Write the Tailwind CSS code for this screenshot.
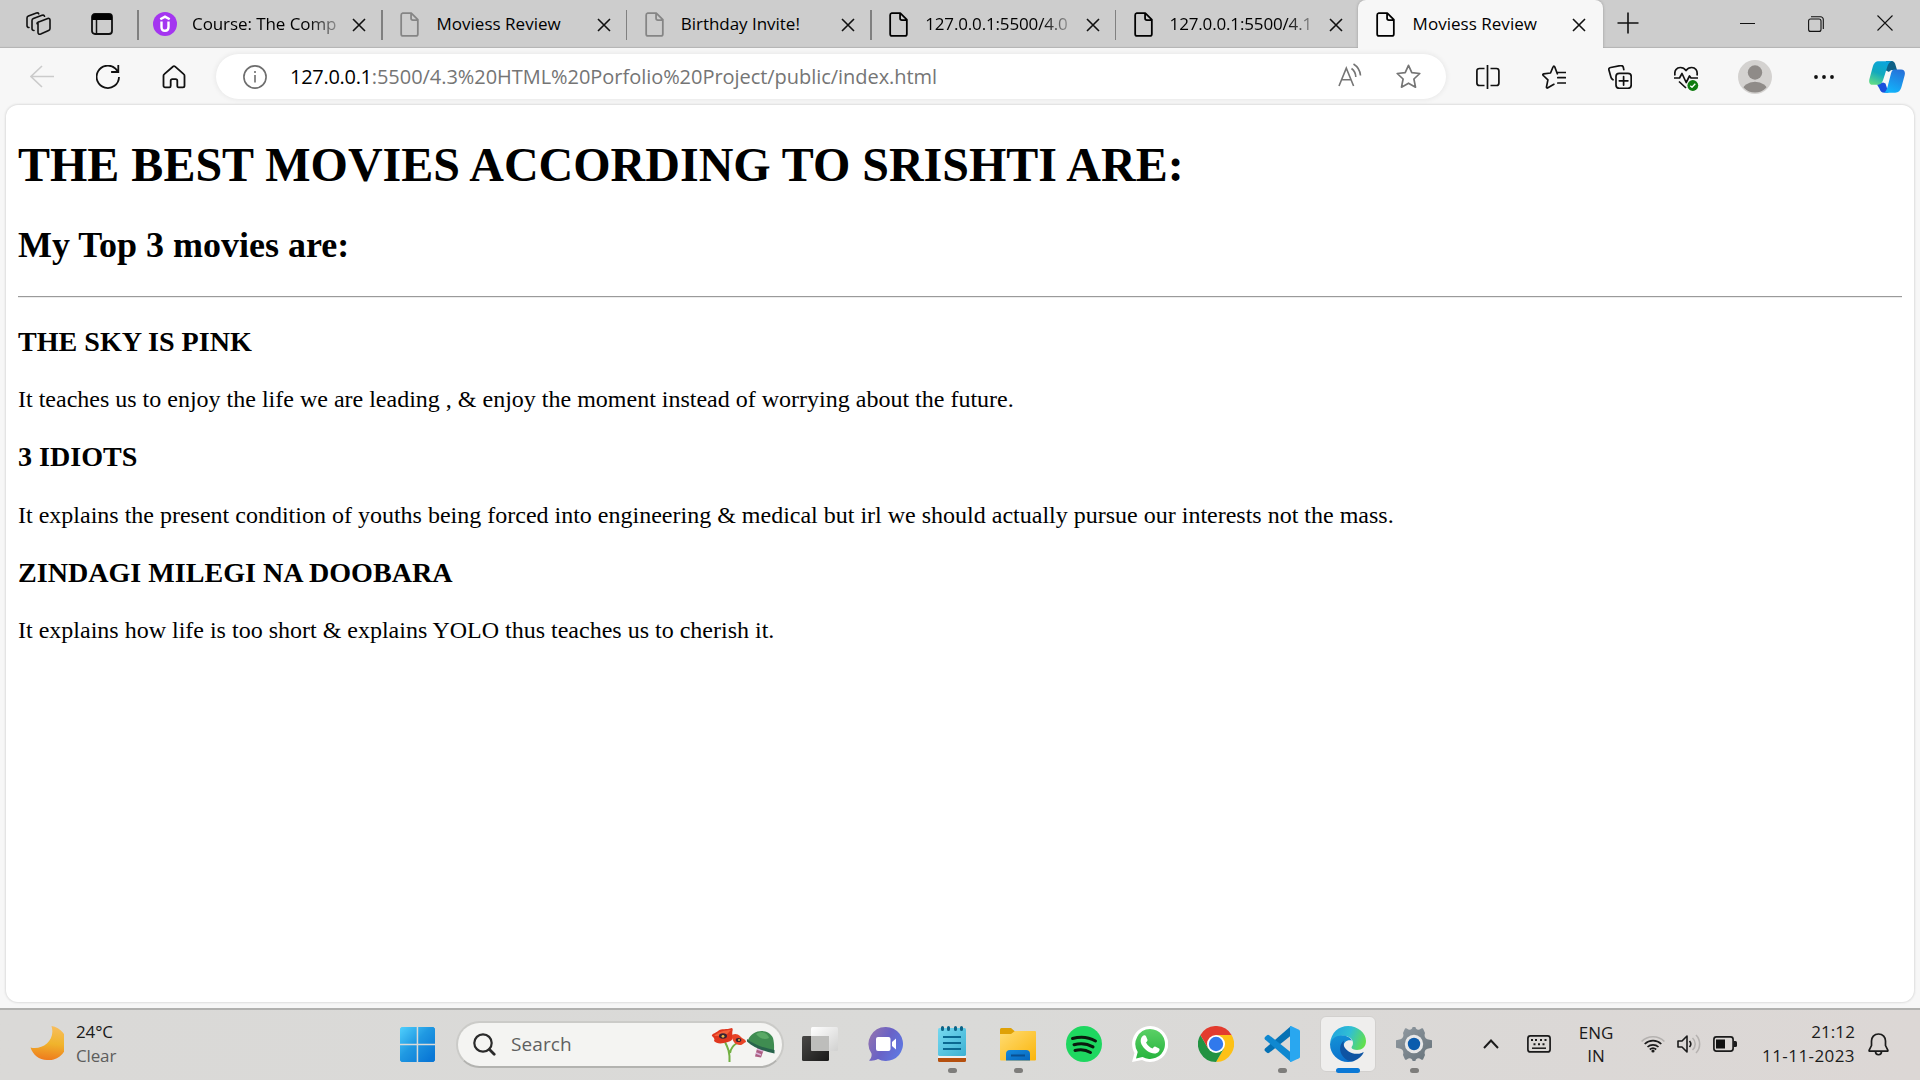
<!DOCTYPE html>
<html lang="en">
<head>
<meta charset="utf-8">
<title>Moviess Review</title>
<script src="https://cdn.jsdelivr.net/npm/@tailwindcss/browser@4"></script>
</head>
<body class="w-[1920px] h-[1080px] overflow-hidden bg-[#f7f7f7] text-black font-['Open_Sans','Noto_Sans',sans-serif]">
<svg class="hidden">
  <symbol id="page" viewBox="0 0 24 24"><path d="M5.5 1h8.2L20 7.300V21a2 2 0 0 1-2 2H6a2 2 0 0 1-2-2V2.800A1.800 1.800 0 0 1 5.500 1ZM13.500 1v5a1.800 1.800 0 0 0 1.800 1.800H20" fill="none" stroke="currentColor" stroke-width="1.700" stroke-linejoin="round"/></symbol>
  <symbol id="x" viewBox="0 0 14 14"><path d="M1 1l12 12M13 1L1 13" fill="none" stroke="#111" stroke-width="1.600"/></symbol>
</svg>
<div class="flex flex-col h-full">

  <!-- Tab strip -->
  <header class="flex h-12 shrink-0 bg-[#cdcdcd] shadow-[inset_0_-2px_1px_-1px_#b4b4b4]">
    <div class="flex w-[137px] shrink-0 items-center pl-[26px] gap-[40px]">
      <svg class="size-[25px]" viewBox="0 0 25 25" fill="none" stroke="#111" stroke-width="1.600" stroke-linejoin="round" stroke-linecap="round"><path d="M12 10.200l9.800-3.700c1.200-.4 2.200.2 2.200 1.500v8.500c0 1-.5 1.700-1.400 2.100l-7.900 3.400c-1.500.600-2.700 0-2.700-1.500V10.500M12 10.200c-1 .4-1 .8-1 1.500M8 18.500c-1.300 0-2-.7-2-2V8.600c0-1 .4-1.600 1.400-2l8.600-3.300c1.500-.5 2.300 0 2.500 1M3 15.500c-1.300 0-2-.7-2-2V6.100c0-1 .4-1.600 1.400-2l8-3c1.300-.4 2-.1 2.300.7"/></svg>
      <svg class="w-[22px] h-[22px]" viewBox="0 0 22 22"><rect x="1" y="1" width="20" height="20" rx="3" fill="none" stroke="#111" stroke-width="1.800"/><path d="M1 7V4a3 3 0 0 1 3-3h14a3 3 0 0 1 3 3v3z" fill="#000"/><path d="M5.500 7v14" stroke="#111" stroke-width="1.500"/></svg>
    </div>

    <div class="flex w-[244.4px] shrink-0 items-center border-l-2 border-transparent relative">
      <span class="absolute -left-[2px] top-[10px] h-[30px] w-[1.500px] bg-[#808080]"></span>
      <svg class="ml-[14px] size-6" viewBox="0 0 24 24"><circle cx="12" cy="12" r="12" fill="#a435f0"/><path d="M7.300 7.300 12 4.600l4.700 2.700M8.500 9.500V15c0 2.700 1.300 3.800 3.500 3.800s3.500-1.100 3.500-3.800V9.500" fill="none" stroke="#fff" stroke-width="2.400"/></svg>
      <span class="ml-[15px] w-[149px] overflow-hidden whitespace-nowrap text-[17px] tracking-[-0.080px] bg-linear-to-r from-black from-78% to-black/20 to-100% bg-clip-text text-transparent">Course: The Comp</span>
      <svg class="ml-[11px] mt-0.5 size-[14px]"><use href="#x"/></svg>
    </div>
    <div class="flex w-[244.4px] shrink-0 items-center border-l-2 border-transparent relative">
      <span class="absolute -left-[2px] top-[10px] h-[30px] w-[1.500px] bg-[#808080]"></span>
      <svg class="ml-[14px] size-[25px] text-[#858585]"><use href="#page"/></svg>
      <span class="ml-[14px] w-[149px] overflow-hidden whitespace-nowrap text-[17px] tracking-[0.030px]">Moviess Review</span>
      <svg class="ml-[12px] mt-0.5 size-[14px]"><use href="#x"/></svg>
    </div>
    <div class="flex w-[244.4px] shrink-0 items-center border-l-2 border-transparent relative">
      <span class="absolute -left-[2px] top-[10px] h-[30px] w-[1.500px] bg-[#808080]"></span>
      <svg class="ml-[14px] size-[25px] text-[#858585]"><use href="#page"/></svg>
      <span class="ml-[14px] w-[149px] overflow-hidden whitespace-nowrap text-[17px] tracking-[-0.030px]">Birthday Invite!</span>
      <svg class="ml-[11px] mt-0.5 size-[14px]"><use href="#x"/></svg>
    </div>
    <div class="flex w-[244.4px] shrink-0 items-center border-l-2 border-transparent relative">
      <span class="absolute -left-[2px] top-[10px] h-[30px] w-[1.500px] bg-[#808080]"></span>
      <svg class="ml-[14px] size-[25px]"><use href="#page"/></svg>
      <span class="ml-[14px] w-[149px] overflow-hidden whitespace-nowrap text-[17px] tracking-[-0.150px] bg-linear-to-r from-black from-78% to-black/20 to-98% bg-clip-text text-transparent">127.0.0.1:5500/4.0</span>
      <svg class="ml-[12px] mt-0.5 size-[14px]"><use href="#x"/></svg>
    </div>
    <div class="flex w-[243px] shrink-0 items-center border-l-2 border-transparent relative">
      <span class="absolute -left-[2px] top-[10px] h-[30px] w-[1.500px] bg-[#808080]"></span>
      <svg class="ml-[14px] size-[25px]"><use href="#page"/></svg>
      <span class="ml-[14px] w-[149px] overflow-hidden whitespace-nowrap text-[17px] tracking-[-0.150px] bg-linear-to-r from-black from-78% to-black/20 to-98% bg-clip-text text-transparent">127.0.0.1:5500/4.1</span>
      <svg class="ml-[10px] mt-0.5 size-[14px]"><use href="#x"/></svg>
    </div>
    <div class="flex w-[245px] shrink-0 items-center rounded-t-lg bg-[#f7f7f7] shadow-[0_0_3px_#999] [clip-path:inset(0_-4px_0_-4px)]">
      <svg class="ml-[15px] size-[25px]"><use href="#page"/></svg>
      <span class="ml-[15px] w-[149px] whitespace-nowrap text-[17px] tracking-[0.030px]">Moviess Review</span>
      <svg class="ml-[10px] mt-0.5 size-[14px]"><use href="#x"/></svg>
    </div>
    <div class="flex grow pt-[12px] pl-[14px]">
      <svg class="size-[22px]" viewBox="0 0 22 22"><path d="M11 .5v21M.5 11h21" stroke="#111" stroke-width="1.600"/></svg>
      <svg class="ml-[101px] mt-1 size-4" viewBox="0 0 16 16"><path d="M0 7.500h15" stroke="#111"/></svg>
      <svg class="ml-[52px] mt-1 size-4" viewBox="0 0 16 16" fill="none" stroke="#111" stroke-width="1.100"><rect x=".6" y="3" width="12.400" height="12.400" rx="2"/><path d="M3 .8h9.500a2.800 2.800 0 0 1 2.800 2.800V13"/></svg>
      <svg class="ml-[53px] mt-[3px] size-4" viewBox="0 0 16 16"><path d="M.5.500l15 15M15.500.500l-15 15" stroke="#111" stroke-width="1.100"/></svg>
    </div>
  </header>

  <!-- Toolbar -->
  <nav class="flex h-[57px] shrink-0 items-center pl-[30px]">
    <svg class="size-6" viewBox="0 0 24 24" fill="none" stroke="#cbcbcb" stroke-width="1.600"><path d="M12 1L1 11.500 12 22M1 11.500h23"/></svg>
    <svg class="ml-[42px] size-6" viewBox="0 0 24 24" fill="none" stroke="#111" stroke-width="1.800"><path d="M23 12A11.200 11.200 0 1 1 19.500 3.700L22 6.800M22.300 0v7h-7.200" /></svg>
    <svg class="ml-[42px] size-6" viewBox="0 0 24 24" fill="none" stroke="#111" stroke-width="1.800" stroke-linejoin="round"><path d="M10.800 1.700a1.800 1.800 0 0 1 2.400 0l8.500 7.400c.5.400.8 1 .8 1.700V20.800c0 .9-.7 1.600-1.600 1.600h-4.300c-.9 0-1.300-.7-1.300-1.600v-5c0-1-.7-1.600-1.600-1.600h-3.400c-1 0-1.600.6-1.600 1.600v5c0 .9-.4 1.600-1.300 1.600H3.100c-.9 0-1.600-.7-1.600-1.600V10.800c0-.7.300-1.300.8-1.700z"/></svg>
    <div class="ml-[30px] flex h-[45px] w-[1230px] items-center rounded-full bg-white pl-[27px] shadow-[0_0_5px_1px_#00000010]">
      <svg class="size-6" viewBox="0 0 24 24" fill="none" stroke="#6e6e6e" stroke-width="1.600"><circle cx="12" cy="12" r="11.100"/><path d="M12 10v7.500M12 6v2"/></svg>
      <span class="ml-[23px] w-[1048px] whitespace-nowrap text-[20px] tracking-[-0.045px] text-[#757575]"><span class="text-black tracking-[-0.290px]">127.0.0.1</span>:5500/4.3%20HTML%20Porfolio%20Project/public/index.html</span>
      <svg class="-mt-1 size-6 shrink-0" viewBox="0 0 24 24" fill="none" stroke="#757575" stroke-width="1.600"><path d="M1 23L8.300 5.200 15.600 23M3.500 16.800h9.600M13.500 5.500a11 11 0 0 1 4.300 8.500M15.500 1a15 15 0 0 1 7 11.500"/></svg>
      <svg class="ml-[34px] size-[25px] shrink-0" viewBox="0 0 25 25" fill="none" stroke="#757575" stroke-width="1.700" stroke-linejoin="round"><path d="M12.500 1.300l3.300 7.300 8 .9-5.900 5.500 1.600 8.200-7-4-7 4 1.600-8.200L1.200 9.500l8-.9z"/></svg>
    </div>
    <svg class="ml-[30px] size-6" viewBox="0 0 24 24" fill="none" stroke="#111" stroke-width="1.700"><path d="M8.500 3.500H3.500C1.800 3.500.9 4.300.9 6v12c0 1.700.9 2.500 2.600 2.500h5M14.500 3.500h6c1.700 0 2.400.8 2.400 2.500v12c0 1.700-.7 2.500-2.400 2.500h-6M11.500 0v24"/></svg>
    <svg class="ml-[42px] size-6" viewBox="0 0 24 24" fill="none" stroke="#111" stroke-width="1.700" stroke-linejoin="round" stroke-linecap="round"><path d="M15.300 8.800L12.800 2c-.5-1.300-1.300-1.300-1.800 0L8.500 8 1.700 8.800c-1 .2-1.200 1-.4 1.700l4.600 4.300-1.400 7c-.2 1.100.5 1.500 1.400 1l6-3.500M15.800 7.500H23.500M15.800 12.700H23.500M15.800 18H23.500"/></svg>
    <svg class="ml-[42px] size-6" viewBox="0 0 24 24" fill="none" stroke="#111" stroke-width="1.700" stroke-linecap="round"><rect x="8" y="8.300" width="15.200" height="15" rx="3.200"/><path d="M15.600 11.500v8.600M11.300 15.800h8.600M5 14.800C3.600 14 3.200 13.300 2.900 12L1 5.300C.5 3.700 1 2.900 2.700 2.500l9.500-1.900c1.700-.3 2.700.200 3.100 1.700l.5 2.300"/></svg>
    <svg class="ml-[42px] size-[26px] mt-1 -mr-[2px] shrink-0" viewBox="0 0 26 26" fill="none" stroke="#111" stroke-width="1.700" stroke-linejoin="round"><path d="M1 9.500C0 4 3 1.500 6.300 1.500c2.700 0 4.700 1.500 5.700 3 1-1.500 3-3 5.700-3C21 1.500 24 4 23 9.500M0 12h5.500L8 7.500l4.200 9 3.300-6.500 1.500 2H24M5 15.500l7 6.500"/><circle cx="18.800" cy="19.500" r="5.400" fill="#107c10" stroke="none"/><path d="M16.300 19.800l1.700 1.500 3.300-3.500" stroke="#fff" stroke-width="1.300"/></svg>
    <svg class="ml-[40px] size-[34px]" viewBox="0 0 34 34"><clipPath id="av"><circle cx="17" cy="17" r="15.500"/></clipPath><circle cx="17" cy="17" r="17" fill="#d4d2d0"/><circle cx="17" cy="12.500" r="7.200" fill="#8f8b88"/><ellipse cx="17" cy="31" rx="12.700" ry="9.300" fill="#8f8b88" clip-path="url(#av)"/></svg>
    <svg class="ml-[40px] size-6" viewBox="0 0 24 24" fill="#111"><circle cx="4" cy="12" r="1.900"/><circle cx="12" cy="12" r="1.900"/><circle cx="20" cy="12" r="1.900"/></svg>
    <svg class="ml-[33px] h-8 w-9 mt-px" viewBox="0 0 36 32">
      <defs><linearGradient id="c1" x1=".6" y1="0" x2=".2" y2="1"><stop offset="0" stop-color="#0ba5dc"/><stop offset=".5" stop-color="#12a9bd"/><stop offset="1" stop-color="#62dd85"/></linearGradient><linearGradient id="c2" x1=".8" y1="0" x2=".4" y2="1"><stop offset="0" stop-color="#2670d8"/><stop offset="1" stop-color="#12b3fb"/></linearGradient></defs>
      <path d="M17 0h5c3 0 4 1.500 4.800 5l1.200 4h-4c-2 0-3 .5-4 2l-4-2z" fill="#0f6187"/><path d="M8 23.500l6-2 2.500 1 3 9.200h-4c-3 0-4-1.500-5-4z" fill="#1b4fdc"/>
      <path d="M10 .3h13c-3 .8-4 3-5 6.500l-3.500 11c-1.300 4.500-3 6-7 6H4c-3.500 0-4.500-2.500-3.500-6l3-11C4.600 2.200 6.600.3 10 .3z" fill="url(#c1)"/>
      <path d="M25 8.500h7c3.500 0 4.500 2.500 3.600 6l-3 11c-1.200 4.200-3 6.200-6.500 6.200H14.500c2.500-.8 3.200-3 4.200-6.500l2.700-10.500c1-4 1.800-6.200 3.600-6.200z" fill="url(#c2)"/>
    </svg>
  </nav>

  <!-- Page -->
  <main class="mx-[6px] h-[897px] shrink-0 flow-root rounded-[12px] bg-white px-3 font-['Liberation_Serif',serif] shadow-[0_0_2px_1px_#dedede]">
    <h1 class="mt-[32px] mb-[33px] text-[48px] leading-[55px] font-bold">THE BEST MOVIES ACCORDING TO SRISHTI ARE:</h1>
    <h2 class="my-[30px] text-[36px] leading-[41px] font-bold">My Top 3 movies are:</h2>
    <hr class="mt-[30px] mb-[28px] h-[2px] border-t border-b border-t-[#9a9a9a] border-b-[#ececec]">
    <h3 class="my-[28px] text-[28.080px] leading-[32px] font-bold">THE SKY IS PINK</h3>
    <p class="my-[24px] text-[24px] leading-[27px]">It teaches us to enjoy the life we are leading , &amp; enjoy the moment instead of worrying about the future.</p>
    <h3 class="my-[28.300px] text-[28.080px] leading-[32px] font-bold">3 IDIOTS</h3>
    <p class="my-[24px] text-[24px] leading-[27px]">It explains the present condition of youths being forced into engineering &amp; medical but irl we should actually pursue our interests not the mass.</p>
    <h3 class="my-[28.300px] text-[28.080px] leading-[32px] font-bold">ZINDAGI MILEGI NA DOOBARA</h3>
    <p class="my-[24px] text-[24px] leading-[27px]">It explains how life is too short &amp; explains YOLO thus teaches us to cherish it.</p>
  </main>

  <!-- Taskbar -->
  <footer class="mt-[6px] flex h-[72px] shrink-0 items-center border-t-2 border-[#b1b1af] bg-linear-to-r from-[#dad9d7] via-[#dadad8] to-[#dcd7d5] pb-[2px] text-[#1b1b1b]">
    <svg class="ml-[30px] -mt-0.5 size-[34px]" viewBox="0 0 34 34"><defs><linearGradient id="mo" x1=".5" y1="0" x2=".4" y2="1"><stop offset="0" stop-color="#f7bd5c"/><stop offset=".5" stop-color="#f0b42c"/><stop offset="1" stop-color="#ee7a1d"/></linearGradient></defs><path d="M21.500 0A17 17 0 0 1 17 34C9 34 3 29 .5 21.500 12 24.500 26 15 21.500 0z" fill="url(#mo)"/></svg>
    <div class="ml-[12px] w-[324px] text-[17px] leading-6 tracking-[-0.150px]"><div>24°C</div><div class="text-[#5d5d5c]">Clear</div></div>
    <svg class="size-[35px] shrink-0" viewBox="0 0 35 35"><defs><linearGradient id="wi" gradientUnits="userSpaceOnUse" x1="0" y1="0" x2="31" y2="31"><stop offset="0" stop-color="#50d0fd"/><stop offset=".5" stop-color="#2099e2"/><stop offset="1" stop-color="#0a78d6"/></linearGradient></defs><path d="M1.500 0H16.700V16.700H0V1.500zM18.200 0H33.500L35 1.500V16.700H18.200zM0 18.200H16.700V35H1.500L0 33.500zM18.200 18.200H35V33.500L33.500 35H18.200z" fill="url(#wi)"/></svg>
    <div class="ml-[21px] flex h-[47px] w-[328px] shrink-0 items-center rounded-full border-2 border-[#cbcbc8] border-b-[#b3b3b0] bg-[#f4f4f2] pl-[15px]">
      <svg class="size-[23px]" viewBox="0 0 23 23" fill="none" stroke="#2a2a2a" stroke-linecap="round"><circle cx="10" cy="10" r="8.700" stroke-width="2.200"/><path d="M16.500 16.500l4.700 4.700" stroke-width="2.800"/></svg>
      <span class="ml-[15px] w-[200px] text-[19px] tracking-[0.100px] text-[#5f5f5f]">Search</span>
      <svg class="mt-1 size-9 shrink-0" viewBox="0 0 36 36"><path d="M18.500 34C19 24 17 20 14 14M19 25c1-6 4-8 7-10" fill="none" stroke="#72b043" stroke-width="2"/><path d="M1 8C0 6 5 5 7 3c4-3 8-1 14-3 2 2-1 3 1 9 0 4-5 5-9 6-5 1-8 0-10-2 1-2 0-3-2-5z" fill="#e0361e"/><path d="M3 8c4-4 11-6 17-6-3 3-4 5-8 6z" fill="#f4613a"/><ellipse cx="12" cy="8" rx="4" ry="2.800" fill="#382435"/><circle cx="12" cy="8.300" r="1.400" fill="#efb943"/><path d="M21 7c3-2 6-1 8 1 2 3 6 3 6 6-3 1-3 3-6 3-5 0-8-4-8-10z" fill="#e84427"/><ellipse cx="27.500" cy="12" rx="2.800" ry="2" fill="#3a2233"/><circle cx="28" cy="12" r="1" fill="#efb943"/></svg>
      <svg class="size-7 shrink-0" viewBox="0 0 28 28"><path d="M11 15l6 3-1 4-2 5.500-6-1 1-4z" fill="#ad5f83"/><path d="M10 19l6 2M9 23l5 2" stroke="#dbb6dc" stroke-width="1.500"/><path d="M1 10C6-1 21-2 26 8c1.500 6 1 10 1 14C19 21 9 17 1 10z" fill="#3f8c51"/><path d="M9 4c5-4 12-1 13 4-4 2-9 1-13-4z" fill="#5aa966"/><path d="M0 9C8 15 18 18.500 27.500 20v3.500C17 21 7 18 0 11.500z" fill="#28644c"/></svg>
    </div>

    <div class="-ml-[3px] flex h-full shrink-0 items-center">
      <div class="flex h-full w-[66px] items-center justify-center pl-3">
        <svg class="size-9" viewBox="0 0 36 36"><defs><linearGradient id="tv" x1="0" y1="0" x2="1" y2="1"><stop offset="0" stop-color="#494846"/><stop offset="1" stop-color="#191919"/></linearGradient><linearGradient id="tw" x1="0" y1="0" x2="1" y2="1"><stop offset="0" stop-color="#fff"/><stop offset="1" stop-color="#d1d1d0"/></linearGradient></defs><rect x="0" y="10" width="27" height="25" rx="1.500" fill="url(#tv)"/><rect x="9" y="1" width="27" height="24" rx="1.500" fill="url(#tw)"/><path d="M9 10h18v15H10.500L9 23.500z" fill="#bdbdbb"/></svg>
      </div>
      <div class="flex h-full w-[66px] items-center justify-center pl-3">
        <svg class="size-9" viewBox="0 0 36 36"><defs><linearGradient id="ch" x1="0" y1=".2" x2="1" y2=".7"><stop offset="0" stop-color="#9273b0"/><stop offset=".5" stop-color="#6962c6"/><stop offset="1" stop-color="#5e79e3"/></linearGradient></defs><path d="M18 1a17 17 0 1 1-8 32c-3 1.500-6 2-9 1.500 2-2 3-4 2.500-7A17 17 0 0 1 18 1z" fill="url(#ch)"/><rect x="8" y="11" width="14.500" height="14" rx="2" fill="#fff"/><path d="M24 16l4-3.500v11L24 20z" fill="#fff"/></svg>
      </div>
      <div class="relative flex h-full w-[66px] items-center justify-center pl-3">
        <svg class="size-9" viewBox="0 0 36 36"><defs><linearGradient id="np" x1="0" y1="0" x2="1" y2="1"><stop offset="0" stop-color="#76d9f0"/><stop offset="1" stop-color="#3db1d3"/></linearGradient></defs><path d="M4 31h28v3.500a1.500 1.500 0 0 1-1.500 1.500h-25A1.500 1.500 0 0 1 4 34.500z" fill="#b5500f"/><path d="M4 29h28v3H4z" fill="#f2f0ef"/><rect x="4" y="2" width="28" height="28" rx="1.500" fill="url(#np)"/><path d="M9 11h18M9 17h18M9 23h18" stroke="#0a6891" stroke-width="2"/><path d="M8.500 1.500v2M14.500 1.500v2M21.500 1.500v2M27.500 1.500v2" stroke="#0d6487" stroke-width="3" stroke-linecap="round"/></svg>
        <span class="absolute bottom-[5px] left-[35px] h-[5px] w-[9px] rounded-full bg-[#7e7d7b]"></span>
      </div>
      <div class="relative flex h-full w-[66px] items-center justify-center pl-3">
        <svg class="size-9" viewBox="0 0 36 36"><defs><linearGradient id="fo" x1="0" y1="0" x2="1" y2="1"><stop offset="0" stop-color="#ffdc73"/><stop offset="1" stop-color="#fab50b"/></linearGradient><linearGradient id="fb" x1="0" y1="0" x2="1" y2="1"><stop offset="0" stop-color="#158add"/><stop offset="1" stop-color="#0766bd"/></linearGradient></defs><path d="M0 3.500A1.500 1.500 0 0 1 1.500 2H11l4 3.500H34V12H0z" fill="#dfa106"/><path d="M0 8h11l4-3h20a1 1 0 0 1 1 1v27.500a1 1 0 0 1-1 1H1a1 1 0 0 1-1-1z" fill="url(#fo)"/><path d="M6 34.500V28q0-4 4-4h16q4 0 4 4v6.500z" fill="url(#fb)"/><path d="M11 29.500h14" stroke="#094f90" stroke-width="2"/></svg>
        <span class="absolute bottom-[5px] left-[35px] h-[5px] w-[9px] rounded-full bg-[#7e7d7b]"></span>
      </div>
      <div class="flex h-full w-[66px] items-center justify-center pl-3">
        <svg class="size-9" viewBox="0 0 36 36"><circle cx="18" cy="18" r="18" fill="#1ed760"/><path d="M6.500 12.500c8-2.300 16.500-1.300 23 2.500M8 18.700c7-2 13.500-1 19 2.200M9 24.500c6-1.500 11-.8 15.500 2" fill="none" stroke="#0a1a0e" stroke-width="3" stroke-linecap="round"/></svg>
      </div>
      <div class="flex h-full w-[66px] items-center justify-center pl-3">
        <svg class="size-9" viewBox="0 0 36 36"><path d="M18 0a18 18 0 1 1-8 34L0 36l2.500-9A18 18 0 0 1 18 0z" fill="#fff"/><defs><linearGradient id="wa" x1="0" y1="0" x2="0" y2="1"><stop offset="0" stop-color="#5bd066"/><stop offset="1" stop-color="#27b43e"/></linearGradient></defs><path d="M18 3a15 15 0 1 1-7.500 28L4 32.500 5.700 26A15 15 0 0 1 18 3z" fill="url(#wa)"/><path d="M11.500 9.500c1-.5 2-.3 2.500.7l1.500 3.500c.3.800-.8 2-1.500 2.800 1.500 3 3.500 4.600 6.500 6 1-1 1.700-2.300 2.600-2l4 2c.8.500.5 2-.3 3-2 2.500-5 2.500-8 1.300-5-2-8.500-6-9.800-9.800-.8-3 .3-6.500 2.500-7.500z" fill="#fff"/></svg>
      </div>
      <div class="flex h-full w-[66px] items-center justify-center pl-3">
        <svg class="size-9" viewBox="0 0 36 36"><path d="M18 18L2.400 9A18 18 0 0 1 33.600 9z" fill="#e33b2e"/><path d="M18 9H33.600A18 18 0 0 1 18 36l7.800-13.500z" fill="#fdc116"/><path d="M10.200 22.500L2.400 9A18 18 0 0 0 18 36l7.800-13.500z" fill="#229342"/><path d="M2.400 9l7.800 13.500L18 9z" fill="#e33b2e"/><circle cx="18" cy="18" r="9" fill="#fff"/><circle cx="18" cy="18" r="7.200" fill="#3179ec"/></svg>
      </div>
      <div class="relative flex h-full w-[66px] items-center justify-center pl-3">
        <svg class="size-9" viewBox="0 0 36 36"><path d="M1 22.500a2 2 0 0 0 0 2.500l2 1.800q1 .7 2.200 0L27 9.500V0z" fill="#0571b4"/><path d="M1 13.500a2 2 0 0 1 0-2.500l2-1.800q1-.7 2.200 0L27 26.500V36z" fill="#0f88d0"/><path d="M27 0l8 3.700q1 .5 1 1.500v25.600q0 1-1 1.500L27 36q-.5 0-1-.5V.5q.5-.5 1-.5z" fill="#29a7f0"/></svg>
        <span class="absolute bottom-[5px] left-[35px] h-[5px] w-[9px] rounded-full bg-[#7e7d7b]"></span>
      </div>
      <div class="relative flex h-full w-[66px] items-center justify-center pl-3">
        <span class="absolute top-[6px] left-[11px] size-[56px] rounded-md border border-[#d2d0ce] bg-[#efeeed]"></span>
        <svg class="relative size-9" viewBox="0 0 36 36"><defs><linearGradient id="e1" x1="0" y1=".3" x2="1" y2=".6"><stop offset="0" stop-color="#20a3df"/><stop offset=".5" stop-color="#31bfd4"/><stop offset="1" stop-color="#62e04b"/></linearGradient><linearGradient id="e2" x1=".3" y1="0" x2=".5" y2="1"><stop offset="0" stop-color="#1491d6"/><stop offset="1" stop-color="#0b70cc"/></linearGradient></defs><path d="M0 18C1 6 9 0 18 0c10 0 18 7 18 15 0 6-4 9-9 9-3 0-5.500-1-5.500-2.500 0-1 1.500-1.700 1.500-4.500 0-5-6-8-12-7C6 11 1.500 14 0 18z" fill="url(#e1)"/><path d="M0 18C1.500 12.500 6 9.500 11.500 9.500c5 0 9 2 10.500 5-5-1.500-9 2-8.500 6.500C14 28 19 33 24 35a18 18 0 0 1-6 1A18 18 0 0 1 0 18z" fill="url(#e2)"/><path d="M14 14.500c-5 4-5 11-1 16 3 4 7 5.500 11 4.500 5-2 8-5 9.700-8.500-.5-.5-1 0-2 .4-4 1.500-9 1.300-13-1.400-4.500-3-6-7-4.700-11z" fill="#0f54a3"/></svg>
        <span class="absolute bottom-[5px] left-[27px] h-[5px] w-[24px] rounded-full bg-[#0a78d6]"></span>
      </div>
      <div class="relative flex h-full w-[66px] items-center justify-center pl-3">
        <svg class="size-9" viewBox="0 0 36 36"><defs><linearGradient id="se" x1="0" y1="0" x2="1" y2="1"><stop offset="0" stop-color="#929ba2"/><stop offset="1" stop-color="#66727a"/></linearGradient></defs><path d="M9 2.500a1.500 1.500 0 0 1 1.800 0c2.500 2 5.200 1.500 5.800-1.500h2.800c.6 3 3.300 3.500 5.800 1.500a1.500 1.500 0 0 1 1.800 0l2 4.500c-1.200 3.300.5 6.200 3.500 6.500l3.500.8v7.400l-3.500.8c-3 .3-4.700 3.200-3.500 6.500l-2 4.500a1.500 1.500 0 0 1-1.800 0c-2.500-2-5.200-1.500-5.800 1.500h-2.800c-.6-3-3.300-3.500-5.800-1.500a1.500 1.500 0 0 1-1.800 0L7 29c1.200-3.300-.5-6.200-3.500-6.500L0 21.700v-7.400l3.500-.8C6.500 13.200 8.200 10.300 7 7z" fill="url(#se)"/><circle cx="18" cy="18" r="9.200" fill="#e8e8e8"/><circle cx="18" cy="18" r="6.200" fill="#0b5cad"/></svg>
        <span class="absolute bottom-[5px] left-[35px] h-[5px] w-[9px] rounded-full bg-[#7e7d7b]"></span>
      </div>
    </div>

    <div class="ml-auto flex shrink-0 items-center pr-[31px]">
      <svg class="size-4" viewBox="0 0 16 16"><path d="M1 12l7-7.500 7 7.500" fill="none" stroke="#1b1b1b" stroke-width="2"/></svg>
      <svg class="ml-[28px] h-[18px] w-6" viewBox="0 0 24 18" fill="none" stroke="#1b1b1b"><rect x=".9" y=".9" width="22.200" height="16" rx="2.500" stroke-width="1.700"/><path d="M4 5h2M8 5h2M13 5h2M17.500 5h2M6.500 9.200h2M11 9.200h2M15.500 9.200h2" stroke-width="2"/><path d="M5 13.200h14" stroke-width="1.500"/></svg>
      <div class="ml-[24px] w-[42px] text-center text-[17px] leading-[23px] tracking-[-0.100px]"><div>ENG</div><div>IN</div></div>
      <svg class="ml-[24px] h-[18px] w-6" viewBox="0 0 24 18" fill="none" stroke="#1b1b1b" stroke-width="1.700"><path d="M.6 6.500a16 16 0 0 1 22.800 0" stroke="#b5b2b0"/><path d="M3.700 9a12 12 0 0 1 16.600 0M6.500 12a8 8 0 0 1 11 0M8.800 14.500a5 5 0 0 1 6.400 0"/><circle cx="12" cy="16" r="1.600" fill="#1b1b1b" stroke="none"/></svg>
      <svg class="ml-[12px] h-5 w-6" viewBox="0 0 24 20" fill="none" stroke="#1b1b1b" stroke-width="1.600" stroke-linejoin="round"><path d="M1 7h4l5-5v16l-5-5H1z"/><path d="M12.500 7a4.500 4.500 0 0 1 0 6"/><path d="M15.500 4a8 8 0 0 1 0 12M19 1a13 13 0 0 1 0 18" stroke="#b5b2b0"/></svg>
      <svg class="ml-[12px] h-4 w-6" viewBox="0 0 24 16"><rect x=".9" y=".9" width="19.200" height="14.200" rx="2.500" fill="none" stroke="#1b1b1b" stroke-width="1.700"/><rect x="3" y="3.500" width="9" height="9" fill="#111"/><path d="M21 5h1.500q1.500 0 1.500 1.500v3q0 1.500-1.500 1.500H21z" fill="#1b1b1b"/></svg>
      <div class="ml-[18px] w-[100px] text-right text-[17px] leading-6 tracking-[0.100px]"><div>21:12</div><div class="tracking-[0.420px]">11-11-2023</div></div>
      <svg class="ml-[13px] h-[23px] w-[21px]" viewBox="0 0 21 23" fill="none" stroke="#1b1b1b" stroke-width="1.700" stroke-linejoin="round"><path d="M10.500 1C6 1 3.500 4.500 3.500 8v4.500L1.200 17.200c-.3.700 0 1 .6 1h17.400c.6 0 .9-.3.600-1L17.500 12.500V8c0-3.500-2.500-7-7-7zM7.500 18.500c0 4.300 6 4.300 6 0"/></svg>
    </div>
  </footer>
</div>
</body>
</html>
